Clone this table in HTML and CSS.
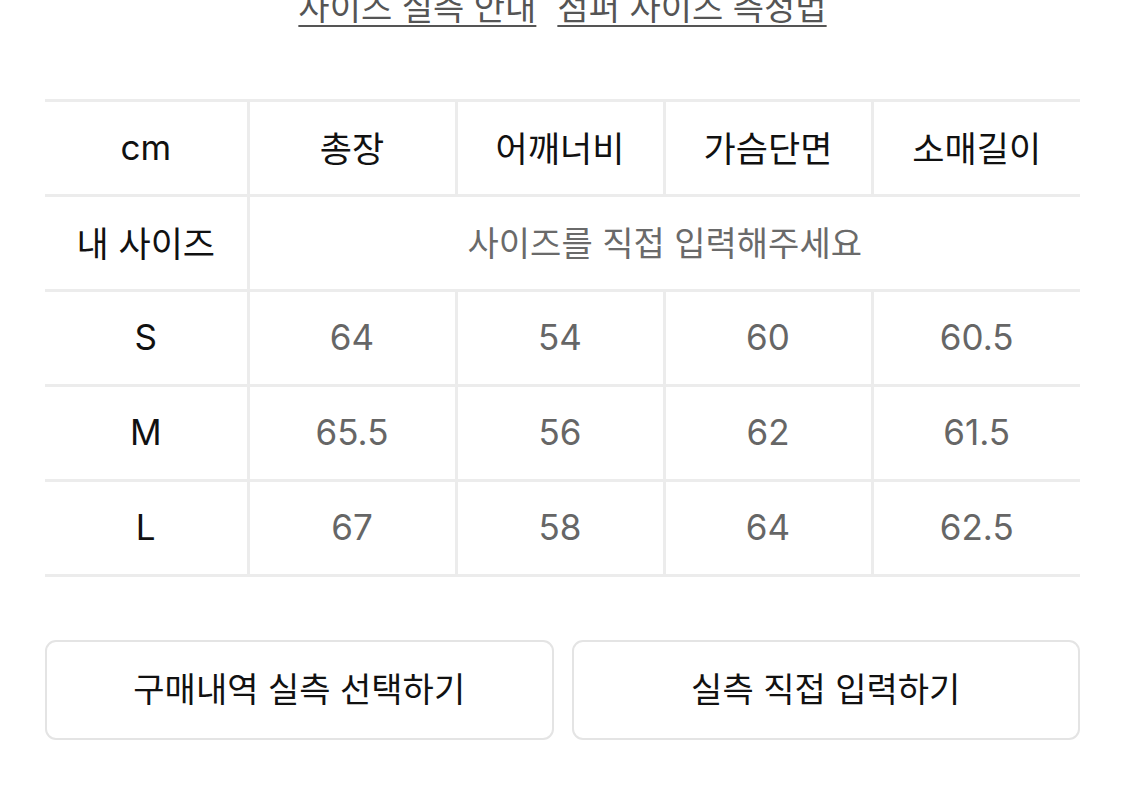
FILE: index.html
```html
<!DOCTYPE html>
<html lang="ko">
<head>
<meta charset="utf-8">
<title>사이즈</title>
<link rel="stylesheet" href="styles.css">
</head>
<body>
<div class="page">
  <nav class="links">
    <a class="link" href="#">사이즈 실측 안내</a>
    <a class="link" href="#">점퍼 사이즈 측정법</a>
  </nav>

  <table class="size-table">
    <colgroup>
      <col class="col-label"><col><col><col><col>
    </colgroup>
    <tr>
      <td class="latin head">cm</td>
      <td class="ko head">총장</td>
      <td class="ko head">어깨너비</td>
      <td class="ko head">가슴단면</td>
      <td class="ko head">소매길이</td>
    </tr>
    <tr>
      <td class="ko head">내 사이즈</td>
      <td class="ko hint" colspan="4">사이즈를 직접 입력해주세요</td>
    </tr>
    <tr>
      <td class="latin head">S</td>
      <td class="latin val">64</td>
      <td class="latin val">54</td>
      <td class="latin val">60</td>
      <td class="latin val">60.5</td>
    </tr>
    <tr>
      <td class="latin head">M</td>
      <td class="latin val">65.5</td>
      <td class="latin val">56</td>
      <td class="latin val">62</td>
      <td class="latin val">61.5</td>
    </tr>
    <tr>
      <td class="latin head">L</td>
      <td class="latin val">67</td>
      <td class="latin val">58</td>
      <td class="latin val">64</td>
      <td class="latin val">62.5</td>
    </tr>
  </table>

  <div class="actions">
    <button class="btn" type="button">구매내역 실측 선택하기</button>
    <button class="btn" type="button">실측 직접 입력하기</button>
  </div>
</div>
</body>
</html>
```

FILE: styles.css
```css
html, body {
  margin: 0;
  padding: 0;
  background: #ffffff;
}

body {
  font-family: "Inter", "Noto Sans CJK KR", sans-serif;
  color: #111111;
  overflow: hidden;
}

.page {
  padding: 0 45px;
}

.links {
  display: flex;
  justify-content: center;
  gap: 21px;
  margin-top: -14px;
  height: 40px;
}

.link {
  font-family: "Noto Sans CJK KR", sans-serif;
  font-size: 34px;
  line-height: 40px;
  color: #555555;
  text-decoration: underline;
  text-decoration-thickness: 2px;
  text-underline-offset: 5px;
}

.size-table {
  margin-top: 73px;
  width: 100%;
  table-layout: fixed;
  border-collapse: collapse;
  border-top: 3px solid #ececec;
}

.col-label {
  width: 203px;
}

.size-table td {
  height: 89px;
  padding: 0 0 3px;
  text-align: center;
  vertical-align: middle;
  border-bottom: 3px solid #ececec;
  border-left: 3px solid #ececec;
}

.size-table td:first-child {
  border-left: none;
}

.latin {
  font-family: "Inter", sans-serif;
  font-size: 35px;
}

.ko {
  font-family: "Noto Sans CJK KR", sans-serif;
}

.head {
  color: #111111;
}

.ko.head {
  font-size: 35px;
  font-weight: 400;
}

.val {
  color: #666666;
}

.hint {
  font-size: 34px;
  color: #6a6a6a;
}

.actions {
  display: flex;
  gap: 18px;
  margin-top: 63px;
}

.btn {
  flex: 1;
  height: 100px;
  background: #ffffff;
  border: 2px solid #e4e4e4;
  border-radius: 11px;
  font-family: "Noto Sans CJK KR", sans-serif;
  font-size: 34px;
  font-weight: 400;
  color: #111111;
  padding: 0 0 6px;
  cursor: pointer;
}
```
